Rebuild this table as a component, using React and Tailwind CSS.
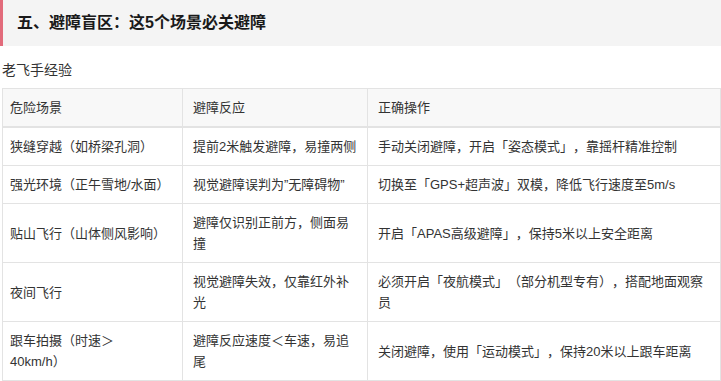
import React from "react";

const rows = [
  ["狭缝穿越（如桥梁孔洞）", "提前2米触发避障，易撞两侧", "手动关闭避障，开启「姿态模式」，靠摇杆精准控制"],
  ["强光环境（正午雪地/水面）", "视觉避障误判为”无障碍物”", "切换至「GPS+超声波」双模，降低飞行速度至5m/s"],
  ["贴山飞行（山体侧风影响）", "避障仅识别正前方，侧面易撞", "开启「APAS高级避障」，保持5米以上安全距离"],
  ["夜间飞行", "视觉避障失效，仅靠红外补光", "必须开启「夜航模式」（部分机型专有），搭配地面观察员"],
  [
    <>
      跟车拍摄（时速＞
      <br />
      40km/h）
    </>,
    "避障反应速度＜车速，易追尾",
    "关闭避障，使用「运动模式」，保持20米以上跟车距离",
  ],
];

const App = () => {
  return (
    <div
      className="w-[721px] h-[381px] bg-white overflow-hidden text-[#333] [text-spacing-trim:space-all]"
      style={{ fontFamily: '"Liberation Sans", "Noto Sans CJK SC", sans-serif' }}
    >
      {/* section heading */}
      <div className="h-[46px] flex items-center bg-[#f4f4f4] border-l-[3px] border-[#e26b7b] pl-[14px]">
        <h2 className="text-[16px] font-bold text-[#1a1a1a]">五、避障盲区：这5个场景必关避障</h2>
      </div>

      <div className="mt-[14px] h-[20px] flex items-center pl-[2px] text-[14px] leading-[20px]">老飞手经验</div>

      <table className="mt-[8px] ml-[2px] w-[719px] border-collapse table-fixed text-[13px] leading-[21px]">
        <colgroup>
          <col className="w-[180px]" />
          <col className="w-[185px]" />
          <col />
        </colgroup>
        <thead>
          <tr className="bg-[#f8f8f8]">
            <th className="border border-[#e3e3e3] border-b-2 pl-[7px] pr-2 py-2 text-left font-normal">危险场景</th>
            <th className="border border-[#e3e3e3] border-b-2 pl-[10px] pr-2 py-2 text-left font-normal">避障反应</th>
            <th className="border border-[#e3e3e3] border-b-2 pl-[10px] pr-2 py-2 text-left font-normal">正确操作</th>
          </tr>
        </thead>
        <tbody>
          {rows.map((r, i) => (
            <tr key={i}>
              <td className="border border-[#e3e3e3] pl-[7px] pr-2 py-2 align-middle">{r[0]}</td>
              <td className="border border-[#e3e3e3] pl-[10px] pr-[10px] py-2 align-middle">{r[1]}</td>
              <td className="border border-[#e3e3e3] pl-[10px] pr-[10px] py-2 align-middle">{r[2]}</td>
            </tr>
          ))}
        </tbody>
      </table>
    </div>
  );
};

export default App;
